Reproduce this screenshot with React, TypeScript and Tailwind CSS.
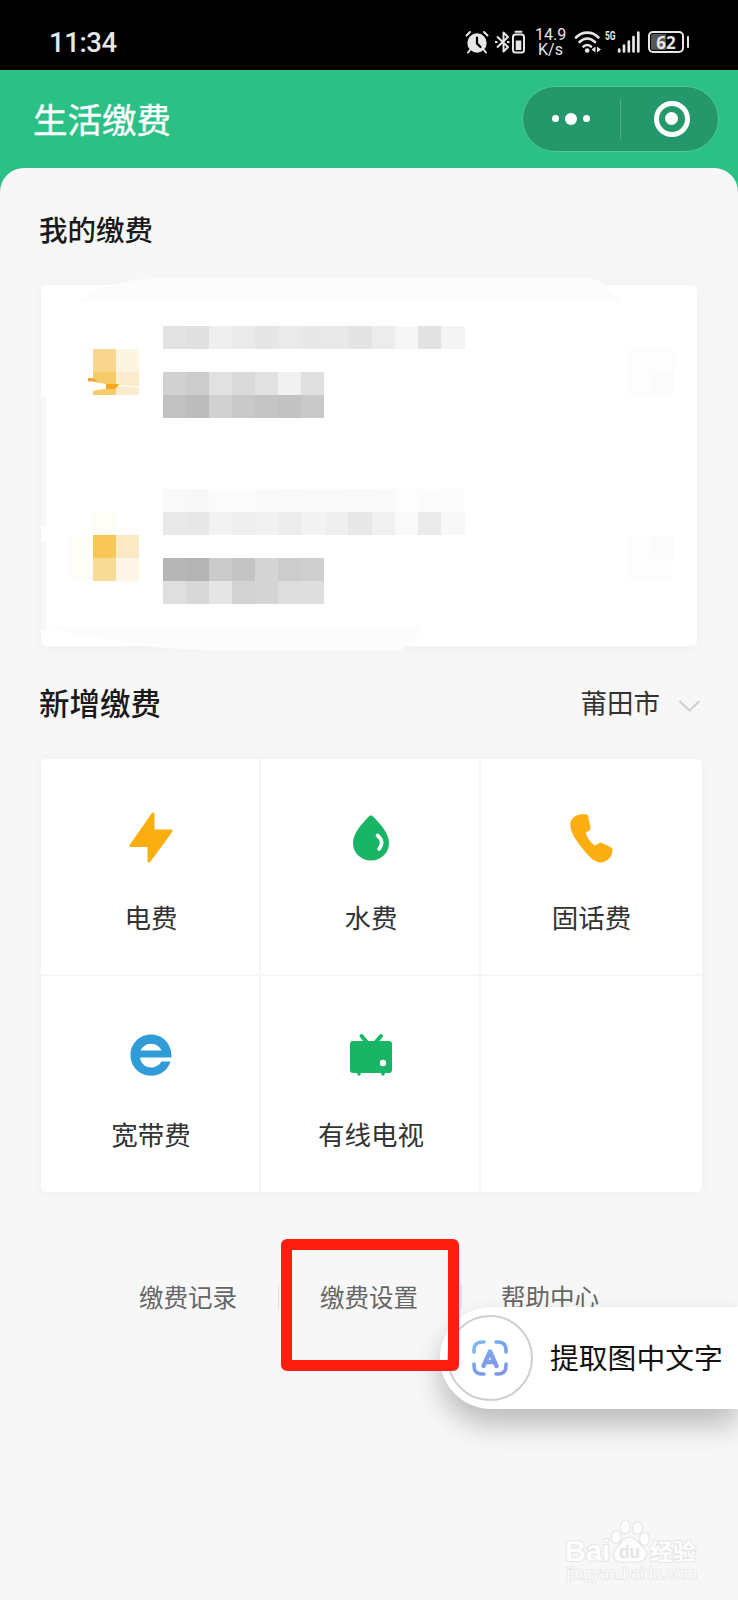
import type { ReactNode } from 'react';

const BoltIcon = () => (
  <svg width="46" height="54" viewBox="0 0 46 54">
    <path d="M25 3 L25 20 L43 20 L21 50 L21 34.500 L3 34.500 Z" fill="#fbae10" stroke="#fbae10" strokeWidth="3" strokeLinejoin="round" />
  </svg>
);

const DropIcon = () => (
  <svg width="40" height="54" viewBox="0 0 40 54">
    <path d="M20 4.500 C21 4.500 21.700 5 22.400 5.800 C29 13 38 22 38 32 C38 42 30 49.500 20 49.500 C10 49.500 2 42 2 32 C2 22 11 13 17.600 5.800 C18.300 5 19 4.500 20 4.500 Z" fill="#18b566" />
    <path d="M26.500 24.500 C31.500 28.500 32 33.500 28 38" fill="none" stroke="#fff" strokeWidth="3.600" strokeLinecap="round" />
  </svg>
);

const PhoneIcon = () => (
  <svg width="46" height="54" viewBox="1 0 46 54">
    <path
      d="M12 3.500 C15 3 17.500 3.200 18.500 3.400 C19.400 3.600 19.900 4.200 20.200 5.200 L22.500 16.500 C22.700 17.600 22.500 18.300 21.700 19 L17.800 21.800 C18.800 26.500 22 31 26.600 34.800 L31.500 32 C32.400 31.500 33.200 31.500 34.200 32 L43 36.600 C44.300 37.300 44.700 38 44.600 39.300 C44.200 46.500 38.500 51.400 32.500 51.400 C27 51.400 22 46.500 16.500 40 C9 31 2.200 21.500 2.200 13.500 C2.200 8.500 6.500 4.200 12 3.500 Z"
      fill="#fbae10"
    />
  </svg>
);

const BroadbandIcon = () => (
  <svg width="42" height="54" viewBox="0 0 42 54">
    <path
      fillRule="evenodd"
      d="M21 6.500 C33 6.500 42 16 41.500 29.500 L10 29.500 C10.800 35.500 15.500 39.500 21 39.500 C25.500 39.500 29.500 37 31.500 33.500 L40.500 33.500 C38 42 30.500 47.700 21 47.700 C9.500 47.700 0.500 38.500 0.500 27 C0.500 15.500 9.500 6.500 21 6.500 Z M10.800 22.500 L31.500 22.500 C29.800 18.500 26 15.700 21 15.700 C16 15.700 12.300 18.500 10.800 22.500 Z"
      fill="#2f9bd7"
    />
  </svg>
);

const TvIcon = () => (
  <svg width="44" height="54" viewBox="0 0 44 54">
    <path d="M12.500 8 L21.500 18.500 M32 8 L23 18.500" stroke="#18b566" strokeWidth="4" strokeLinecap="round" />
    <path d="M10 45 V46 M34 45 V46" stroke="#18b566" strokeWidth="3.500" strokeLinecap="round" />
    <rect x="1" y="13" width="42" height="32" rx="3" fill="#18b566" />
    <circle cx="34" cy="35" r="3.200" fill="#fff" />
  </svg>
);

const services: { label: string; icon: ReactNode }[] = [
  { label: '电费', icon: <BoltIcon /> },
  { label: '水费', icon: <DropIcon /> },
  { label: '固话费', icon: <PhoneIcon /> },
  { label: '宽带费', icon: <BroadbandIcon /> },
  { label: '有线电视', icon: <TvIcon /> },
];

const accounts = [
  {
    icon: ['bg-[#f9d78e]', 'bg-[#fdf4e2]', 'bg-[#f8cb69]', 'bg-[#fbecce]'],
    faint: [],
    name: [
      'bg-[#e3e3e3]', 'bg-[#e0e0e0]', 'bg-[#efefef]', 'bg-[#eaeaea]', 'bg-[#e6e6e6]', 'bg-[#eaeaea]', 'bg-[#e8e8e8]',
      'bg-[#e9e9e9]', 'bg-[#e4e4e4]', 'bg-[#ececec]', 'bg-[#f6f6f6]', 'bg-[#e2e2e2]', 'bg-[#f4f4f4]',
    ],
    number: [
      'bg-[#d1d1d1]', 'bg-[#cccccc]', 'bg-[#e1e1e1]', 'bg-[#dadada]', 'bg-[#e1e1e1]', 'bg-[#f1f1f1]', 'bg-[#e0e0e0]',
      'bg-[#c1c1c1]', 'bg-[#bcbcbc]', 'bg-[#d1d1d1]', 'bg-[#c9c9c9]', 'bg-[#c5c5c5]', 'bg-[#c2c2c2]', 'bg-[#c9c9c9]',
    ],
  },
  {
    icon: ['bg-[#f7c75a]', 'bg-[#fbe9c6]', 'bg-[#f9db98]', 'bg-[#fef7e9]'],
    faint: [
      'bg-[#f9f9f9]', 'bg-[#f8f8f8]', 'bg-[#fbfbfb]', 'bg-[#fbfbfb]', 'bg-[#fafafa]', 'bg-[#f9f9f9]', 'bg-[#fafafa]',
      'bg-[#fafafa]', 'bg-[#f9f9f9]', 'bg-[#fafafa]', 'bg-[#fdfdfd]', 'bg-[#fbfbfb]', 'bg-[#fcfcfc]',
    ],
    name: [
      'bg-[#e9e9e9]', 'bg-[#e7e7e7]', 'bg-[#f2f2f2]', 'bg-[#efefef]', 'bg-[#f1f1f1]', 'bg-[#ececec]', 'bg-[#f3f3f3]',
      'bg-[#efefef]', 'bg-[#e8e8e8]', 'bg-[#f0f0f0]', 'bg-[#f9f9f9]', 'bg-[#ebebeb]', 'bg-[#f8f8f8]',
    ],
    number: [
      'bg-[#b6b6b6]', 'bg-[#b4b4b4]', 'bg-[#cbcbcb]', 'bg-[#c4c4c4]', 'bg-[#d5d5d5]', 'bg-[#cccccc]', 'bg-[#cfcfcf]',
      'bg-[#dfdfdf]', 'bg-[#d8d8d8]', 'bg-[#e5e5e5]', 'bg-[#d2d2d2]', 'bg-[#d5d5d5]', 'bg-[#dddddd]', 'bg-[#dedede]',
    ],
  },
];

function Mosaic({ cells, className }: { cells: string[]; className: string }) {
  return (
    <div className={`grid auto-rows-[23px] ${className}`}>
      {cells.map((cell, i) => (
        <div key={i} className={cell} />
      ))}
    </div>
  );
}

function StatusBar() {
  return (
    <div className="flex h-[70px] items-start bg-black pl-[49px] pr-[49px] text-[#e6e6e6]">
      <div className="mt-[26px] font-[Roboto,sans-serif] text-[27.500px] leading-[34px] font-medium tracking-[-0.4px]">11:34</div>
      <div className="mt-[26px] ml-auto flex h-8 items-center">
        <svg width="24" height="24" viewBox="0 0 24 24">
          <circle cx="12" cy="13" r="9.700" fill="#e6e6e6" />
          <path d="M1.500 5.500 L5 2 M22.500 5.500 L19 2 M5 20 L3 22.500 M19 20 L21 22.500" stroke="#e6e6e6" strokeWidth="2" strokeLinecap="round" />
          <path d="M12 7.500 V13.500 L15.500 17" fill="none" stroke="#000" strokeWidth="2.200" strokeLinecap="round" />
        </svg>
        <svg className="ml-[5px]" width="31" height="24" viewBox="0 0 31 24">
          <path d="M3 6.500 L14 17 L9.500 21.500 V2.500 L14 7 L3 17.500" fill="none" stroke="#e6e6e6" strokeWidth="2" strokeLinejoin="round" />
          <path d="M1 12 H3.500 M13 12 H15.500" stroke="#e6e6e6" strokeWidth="2" />
          <rect x="19" y="4.500" width="11" height="18" rx="2.500" fill="none" stroke="#e6e6e6" strokeWidth="2" />
          <path d="M21.500 1.700 H27.500" stroke="#e6e6e6" strokeWidth="2" strokeLinecap="round" />
          <rect x="21.700" y="10.500" width="5.600" height="9.500" fill="#e6e6e6" />
        </svg>
        <div className="ml-[10px] w-[31px] text-center font-[Roboto,sans-serif] text-[16px] leading-[15px]">
          <div>14.9</div>
          <div>K/s</div>
        </div>
        <svg className="ml-[8px]" width="28" height="24" viewBox="0 0 28 24">
          <path d="M2 7.500 C8.500 1 18 1 24.500 7.500 M5.500 12 C10.500 7.500 16 7.500 21 12 M9.500 16.500 C12 14.500 14.500 14.500 17 16.500" fill="none" stroke="#e6e6e6" strokeWidth="2.600" strokeLinecap="round" />
          <circle cx="13.200" cy="20.500" r="2.300" fill="#e6e6e6" />
          <path d="M21.500 16.500 V22.500 L17.500 19.500 Z M23 16.500 V22.500 L27 19.500 Z" fill="#e6e6e6" />
        </svg>
        <div className="mt-[-12px] ml-[3px] w-[11px] origin-left scale-x-70 font-[Roboto,sans-serif] text-[12px] leading-[12px] font-bold">5G</div>
        <svg width="24" height="24" viewBox="0 0 24 24">
          <path d="M3.200 19.500 V21.500 M8 15.500 V21.500 M12.800 11.500 V21.500 M17.500 7 V21.500 M22.300 2.500 V21.500" stroke="#e6e6e6" strokeWidth="2.700" strokeLinecap="round" />
        </svg>
        <div className="ml-[8px] flex items-center gap-[3px]">
          <div className="flex h-[22px] w-[36px] items-center justify-center rounded-[5px] border-2 border-[#e6e6e6] bg-linear-to-r from-[#555] from-50% to-black to-50% bg-clip-content p-px font-['Open_Sans',sans-serif] text-[17px] leading-none font-bold">62</div>
          <div className="h-[12px] w-[2px] rounded-sm bg-[#e6e6e6]" />
        </div>
      </div>
    </div>
  );
}

function Header() {
  return (
    <header className="flex h-[98px] items-center justify-between pl-[33px] pr-[19px]">
      <h1 className="-mt-[3px] text-[34.500px] leading-[50px] text-white [-webkit-text-stroke:0.4px_white]">生活缴费</h1>
      <div className="-mt-[1px] flex h-[66px] w-[197px] items-center rounded-full border border-[#51c796] bg-[#24986a]">
        <div className="flex w-[97px] items-center justify-center gap-[6px] pr-[2px]">
          <span className="size-[7px] rounded-full bg-white" />
          <span className="size-[12px] rounded-full bg-white" />
          <span className="size-[7px] rounded-full bg-white" />
        </div>
        <div className="h-10 w-px bg-[#4fae88]" />
        <div className="flex flex-1 justify-center pl-[4px]">
          <div className="flex size-[36px] items-center justify-center rounded-full border-[5px] border-white">
            <span className="size-[13px] rounded-full bg-white" />
          </div>
        </div>
      </div>
    </header>
  );
}

// White-out strokes around the edge of the account card
function BrushMarks() {
  return (
    <svg className="absolute -top-[6px] -left-[1px]" width="690" height="374" viewBox="0 0 690 374">
      <path d="M1 117 H6 V248 H1 Z M1 263 H6 V352 H1 Z" fill="#f7f7f7" />
      <path d="M38 23 C48 12 60 8 96 1 Q100 0 110 0 H552 C566 4 576 12 582 23 Z" fill="#fcfcfc" />
      <path d="M6 348 H381 Q378 360 367 366 L360 372 H190 Q150 371 110 368 C85 362 40 358 6 348 Z" fill="#fcfcfc" />
      <path d="M587 70 H634 V116 H587 Z M587 257 H632 V301 H587 Z" fill="#fdfdfd" />
      <path d="M610 94 H634 V116 H610 Z M610 257 H634 V279 H610 Z" fill="#fbfbfb" />
      <path d="M30 256 H53 V302 H30 Z M53 233 H76 V256 H53 Z" fill="#fffdf8" />
    </svg>
  );
}

function AccountCard() {
  return (
    <div className="relative mx-[41px] h-[361px] rounded-[5px] bg-white pt-[17px] shadow-[0_2px_14px_rgba(0,0,0,0.035)]">
      <BrushMarks />
      {accounts.map((account, i) => (
        <div key={i} className="relative flex h-[186px] pl-[52px]">
          <div className="relative mt-[47px] h-[46px]">
            <Mosaic cells={account.icon} className="w-[46px] grid-cols-2" />
            {i === 0 && (
              <svg className="absolute top-[28px] -left-[5px]" width="52" height="18" viewBox="0 0 52 18">
                <path d="M5 5 L18 7 V12 Q12 12 5 14 Z" fill="#fff" />
                <path d="M0 1 H4 L10 4 L0 4.500 Z" fill="#eba63a" />
                <path d="M18 7 H31 Q29 12 24 12 H18 Z" fill="#f8a81a" />
                <path d="M31 8 L51 9.500 V10.500 L30 9 Z" fill="#fff" />
              </svg>
            )}
          </div>
          <div className="ml-[23.500px] pt-px">
            {account.faint.length > 0 ? (
              <Mosaic cells={account.faint} className="w-[302px] grid-cols-13" />
            ) : (
              <div className="h-[23px]" />
            )}
            <Mosaic cells={account.name} className="w-[302px] grid-cols-13" />
            <Mosaic cells={account.number} className="mt-[23px] w-[162px] grid-cols-7" />
          </div>
        </div>
      ))}
    </div>
  );
}

function ServiceGrid() {
  return (
    <div className="mr-[36px] ml-[41px] grid h-[433px] grid-cols-[220px_220px_221px] grid-rows-[217px_216px] overflow-hidden rounded-[5px] bg-white shadow-[0_2px_14px_rgba(0,0,0,0.035)]">
      {services.map(({ label, icon }, i) => (
        <div
          key={label}
          className={`flex flex-col items-center pt-[52px] ${i !== 2 ? 'border-r-2 border-[#f6f6f6] pl-[2px]' : ''} ${i < 3 ? 'border-b-2 border-b-[#f6f6f6]' : ''}`}
        >
          {icon}
          <span className="mt-[32px] text-[26.500px] leading-[40px] whitespace-nowrap text-[#333]">{label}</span>
        </div>
      ))}
      <div className="border-l-0" />
    </div>
  );
}

function ExtractPill() {
  return (
    <div className="absolute top-[1307px] right-0 flex h-[102px] w-[298px] items-center rounded-l-full bg-white pl-[7px] shadow-[0_16px_28px_rgba(0,0,0,0.24)]">
      <div className="flex size-[86px] items-center justify-center rounded-full border-2 border-[#cfcfcf]">
        <svg width="36" height="36" viewBox="0 0 36 36" fill="none" strokeWidth="3.600" strokeLinecap="round" strokeLinejoin="round">
          <defs>
            <linearGradient id="scan" gradientUnits="userSpaceOnUse" x1="0" y1="0" x2="24" y2="36">
              <stop offset="0" stopColor="#80c0ee" />
              <stop offset="0.5" stopColor="#7ba3ea" />
              <stop offset="1" stopColor="#8097e6" />
            </linearGradient>
          </defs>
          <path d="M2 12 V10 Q2 2 10 2 H12 M24 2 H26 Q34 2 34 10 V12 M34 24 V26 Q34 34 26 34 H24 M12 34 H10 Q2 34 2 26 V24" stroke="url(#scan)" />
          <path d="M11.500 26 L18 11.500 L24.500 26 M14 22 H22" stroke="url(#scan)" strokeWidth="4.400" />
        </svg>
      </div>
      <span className="-mt-[3px] ml-[17px] text-[28.800px] leading-[40px] whitespace-nowrap text-[#111]">提取图中文字</span>
    </div>
  );
}

function Watermark() {
  return (
    <svg className="absolute top-[1515px] left-[562px] overflow-visible" width="160" height="80" viewBox="0 0 160 80" fill="#fdfdfd" stroke="#e6e6e6" strokeWidth="1.200">
      <g paintOrder="stroke" strokeWidth="2">
        <text x="3" y="46" fontFamily="Liberation Sans, sans-serif" fontSize="29" fontWeight="700" textLength="45" lengthAdjust="spacingAndGlyphs">Bai</text>
        <text x="88" y="45" fontFamily="Noto Sans CJK SC, sans-serif" fontSize="23" fontWeight="700">经验</text>
      </g>
      <ellipse cx="54" cy="22" rx="5" ry="6.500" />
      <ellipse cx="63.500" cy="12" rx="5" ry="7" />
      <ellipse cx="75.500" cy="13" rx="5" ry="6.500" />
      <ellipse cx="82.500" cy="24" rx="5" ry="6.500" />
      <path d="M67 22 C74 22 77 29 82 33 C88 40 83 47 75 47 H59 C51 47 50 39 54 34 C59 30 60 22 67 22 Z" />
      <text x="57" y="43" fontFamily="Liberation Sans, sans-serif" fontSize="19" fontWeight="700" fill="#e4e4e4" stroke="none" textLength="21" lengthAdjust="spacingAndGlyphs">du</text>
      <text x="5" y="64" fontFamily="Liberation Sans, sans-serif" fontSize="16" textLength="130" lengthAdjust="spacingAndGlyphs" paintOrder="stroke" strokeWidth="1.500">jingyan.baidu.com</text>
    </svg>
  );
}

export default function App() {
  return (
    <div className="relative h-[1600px] w-[738px] overflow-hidden bg-[#2bc085] font-['Noto_Sans_CJK_SC',sans-serif]">
      <StatusBar />
      <Header />
      <main className="h-[1432px] rounded-t-[24px] bg-[#f7f7f7] pt-[41px]">
        <h2 className="pl-[39px] text-[28.500px] leading-[40px] font-medium text-[#1a1a1a]">我的缴费</h2>
        <div className="mt-[36px]">
          <AccountCard />
        </div>

        <div className="mt-[36px] flex h-[40px] items-center justify-between pr-[37px] pl-[39px]">
          <h2 className="text-[30.500px] leading-[40px] font-medium text-[#1a1a1a]">新增缴费</h2>
          <div className="flex items-center">
            <span className="text-[26.500px] leading-[40px] text-[#333]">莆田市</span>
            <svg className="mt-[7px] ml-[18px]" width="23" height="14" viewBox="0 0 23 14">
              <path d="M1.500 2 L11.500 11.500 L21.500 2" fill="none" stroke="#d0d0d0" strokeWidth="2" />
            </svg>
          </div>
        </div>
        <div className="mt-[37px]">
          <ServiceGrid />
        </div>

        <div className="mt-[85px] ml-[139px] flex items-center text-[24.500px] leading-[40px] text-[#666]">
          <span>缴费记录</span>
          <span className="mx-[41px] h-[24px] w-px bg-[#ddd]" />
          <span>缴费设置</span>
          <span className="mr-[39px] ml-[42px] h-[24px] w-[2px] bg-[#e2e2e2]" />
          <span>帮助中心</span>
        </div>
      </main>

      <ExtractPill />
      <div className="absolute top-[1239px] left-[281px] h-[132px] w-[178px] rounded-[6px] border-[11px] border-[#ff1f10]" />
      <Watermark />
    </div>
  );
}
